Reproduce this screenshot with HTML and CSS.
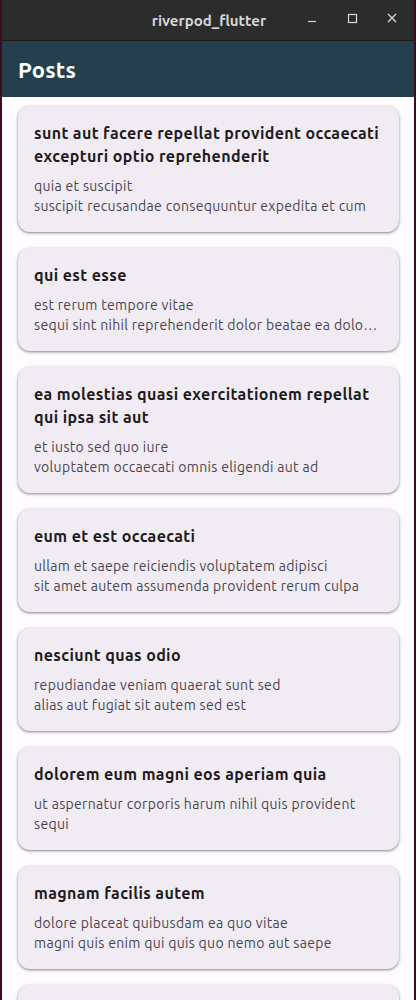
FILE: index.html
```html
<!DOCTYPE html>
<html>
<head>
<meta charset="utf-8">
<link rel="stylesheet" href="styles.css">
</head>
<body>
<div class="window">
  <header class="titlebar">
    <span class="title">riverpod_flutter</span>
    <div class="controls">
      <svg class="ctl" width="16" height="16" viewBox="0 0 16 16"><path d="M4 11.5h8" stroke="#d8d8d8" stroke-width="1.2" fill="none"/></svg>
      <svg class="ctl" width="16" height="16" viewBox="0 0 16 16"><rect x="4.5" y="4.5" width="8" height="8" stroke="#d8d8d8" stroke-width="1.2" fill="none"/></svg>
      <svg class="ctl" width="16" height="16" viewBox="0 0 16 16"><path d="M4 4l8 8M12 4l-8 8" stroke="#d8d8d8" stroke-width="1.3" fill="none"/></svg>
    </div>
  </header>
  <div class="appbar"><h1>Posts</h1></div>
  <main class="list">
    <article class="card"><h2>sunt aut facere repellat provident occaecati excepturi optio reprehenderit</h2><p>quia et suscipit<br>suscipit recusandae consequuntur expedita et cum</p></article>
    <article class="card"><h2>qui est esse</h2><p>est rerum tempore vitae<br>sequi sint nihil reprehenderit dolor beatae ea dolo…</p></article>
    <article class="card"><h2>ea molestias quasi exercitationem repellat qui ipsa sit aut</h2><p>et iusto sed quo iure<br>voluptatem occaecati omnis eligendi aut ad</p></article>
    <article class="card"><h2>eum et est occaecati</h2><p>ullam et saepe reiciendis voluptatem adipisci<br>sit amet autem assumenda provident rerum culpa</p></article>
    <article class="card"><h2>nesciunt quas odio</h2><p>repudiandae veniam quaerat sunt sed<br>alias aut fugiat sit autem sed est</p></article>
    <article class="card"><h2>dolorem eum magni eos aperiam quia</h2><p>ut aspernatur corporis harum nihil quis provident<br>sequi</p></article>
    <article class="card"><h2>magnam facilis autem</h2><p>dolore placeat quibusdam ea quo vitae<br>magni quis enim qui quis quo nemo aut saepe</p></article>
    <article class="card last"></article>
  </main>
</div>
</body>
</html>
```
FILE: styles.css
```css
* { box-sizing: border-box; }
html, body { margin: 0; padding: 0; height: 1000px; overflow: hidden; }
body {
  background: #3a0d22;
  font-family: Ubuntu, Lato, "Noto Sans", sans-serif;
}
.window {
  margin: 0 2px;
  height: 1000px;
  background: #fffbfe;
  display: flex;
  flex-direction: column;
  overflow: hidden;
}
.titlebar {
  height: 41px;
  flex: none;
  background: #2c2c2c;
  border-bottom: 1px solid #1c1c1c;
  display: flex;
  align-items: center;
  justify-content: center;
  position: relative;
}
.title {
  color: #d6d6d6;
  font-weight: 700;
  font-size: 15px;
  margin-left: 2px;
}
.controls {
  position: absolute;
  right: 14px;
  top: 10px;
  display: flex;
  gap: 24px;
}
.ctl { display: block; }
.appbar {
  height: 56px;
  flex: none;
  background: #263f4e;
  display: flex;
  align-items: center;
  padding: 0 16px;
}
.appbar h1 {
  margin: 0;
  color: #ffffff;
  font-size: 22px;
  font-weight: 700;
  letter-spacing: 0.2px;
}
.list {
  padding: 9px 15px 0 16px;
  display: flex;
  flex-direction: column;
  gap: 16px;
}
.card {
  background: #f1ecf4;
  border-radius: 12px;
  padding: 16px;
  box-shadow: 0 1px 2px rgba(0,0,0,0.3), 0 1px 3px 1px rgba(0,0,0,0.15);
}
.card.last { height: 60px; flex: none; }
.card h2 {
  margin: 0;
  font-size: 16px;
  line-height: 23px;
  font-weight: 700;
  letter-spacing: 0.38px;
  color: #1d1b20;
}
.card p {
  margin: 8px 0 0;
  font-size: 14px;
  line-height: 20px;
  letter-spacing: 0.31px;
  color: #49454f;
}
```
